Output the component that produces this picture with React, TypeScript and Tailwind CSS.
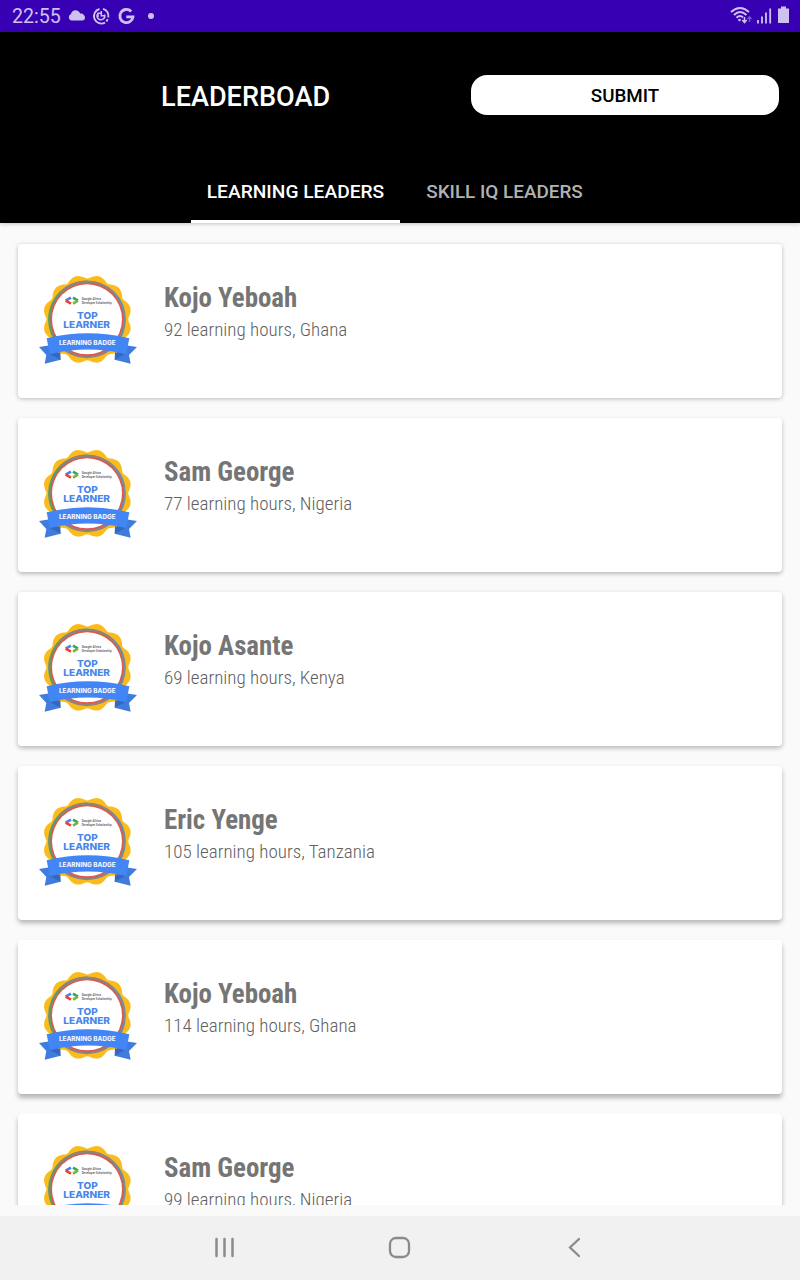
import React from "react";

const leaders = [
  { name: "Kojo Yeboah", detail: "92 learning hours, Ghana" },
  { name: "Sam George", detail: "77 learning hours, Nigeria" },
  { name: "Kojo Asante", detail: "69 learning hours, Kenya" },
  { name: "Eric Yenge", detail: "105 learning hours, Tanzania" },
  { name: "Kojo Yeboah", detail: "114 learning hours, Ghana" },
  { name: "Sam George", detail: "99 learning hours, Nigeria" },
];

// Elevation shadows deepen towards the bottom of the list.
const shadows = [
  "shadow-[0_1px_4px_rgba(0,0,0,0.26)]",
  "shadow-[0_2px_4px_rgba(0,0,0,0.26)]",
  "shadow-[0_2px_5px_rgba(0,0,0,0.28)]",
  "shadow-[0_3px_5px_rgba(0,0,0,0.28)]",
  "shadow-[0_4px_5px_rgba(0,0,0,0.28)]",
  "shadow-[0_4px_5px_rgba(0,0,0,0.28)]",
];

// Scalloped rosette outline: twelve lobes around the badge centre.
const rosette = (() => {
  const points: string[] = [];
  for (let i = 0; i < 360; i += 2) {
    const a = (i * Math.PI) / 180;
    const r = 119 + 14 * Math.sqrt(Math.sin(6 * a) ** 2 + 0.06);
    points.push(`${(172 + r * Math.sin(a)).toFixed(1)},${(163 - r * Math.cos(a)).toFixed(1)}`);
  }
  return points.join(" ");
})();

function Badge() {
  return (
    <svg viewBox="0 0 360 330" className="h-[110px] w-[120px] shrink-0">
      <polygon points={rosette} fill="#fbbc1b" />
      <circle cx="171" cy="163" r="112" fill="#e0574b" />
      <g fill="none" strokeWidth="7">
        <path d="M171 50A113 113 0 0 0 91 243" stroke="#5f9a70" />
        <path d="M91 83A113 113 0 0 1 251 83" stroke="#8c8480" />
        <path d="M251 83A113 113 0 0 1 251 243" stroke="#6f8fa0" />
        <path d="M91 243A113 113 0 0 0 251 243" stroke="#8c8480" />
      </g>
      <circle cx="171" cy="163" r="105" fill="#fff" />
      <path d="M123 98L107 107" fill="none" stroke="#4285f4" strokeWidth="8" />
      <path d="M107 107L123 116" fill="none" stroke="#ea4335" strokeWidth="8" />
      <path d="M129 98L144 107" fill="none" stroke="#34a853" strokeWidth="8" />
      <path d="M144 107L129 116" fill="none" stroke="#72b843" strokeWidth="8" />
      <g fontFamily="Roboto, sans-serif" fill="#555">
        <text x="155" y="106" fontSize="11" fontWeight="500" textLength="58" lengthAdjust="spacingAndGlyphs">Google Africa</text>
        <text x="155" y="116" fontSize="10" fontWeight="500" textLength="90" lengthAdjust="spacingAndGlyphs">Developer Scholarship</text>
      </g>
      <g fontFamily="Inter, sans-serif" fontWeight="800" fill="#4a86e8" textAnchor="middle">
        <text x="172" y="163" fontSize="28" textLength="62" lengthAdjust="spacingAndGlyphs">TOP</text>
        <text x="170" y="188" fontSize="28" textLength="140" lengthAdjust="spacingAndGlyphs">LEARNER</text>
      </g>
      <path d="M27 246L78 238L92 284L44 296L49 270Z" fill="#3f7cdd" />
      <path d="M321 246L268 238L254 284L302 296L297 270Z" fill="#3f7cdd" />
      <path d="M60 267L91 262L92 284Z" fill="#3467bd" />
      <path d="M286 267L255 262L254 284Z" fill="#3467bd" />
      <path d="M50 220Q173 190 298 220L289 267Q173 240 59 267Z" fill="#4285f4" />
      <text x="172" y="239" fontFamily="Inter, sans-serif" fontSize="18.5" fontWeight="800" fill="#eef4ff" textAnchor="middle" textLength="170" lengthAdjust="spacingAndGlyphs">LEARNING BADGE</text>
    </svg>
  );
}

function StatusBar() {
  return (
    <div className="flex h-8 shrink-0 items-center justify-between bg-[#3700b3] pl-3 text-[#cfc1ef]">
      <div className="flex items-center">
        <span className="w-[55px] pt-0.5 text-[19.600px] leading-8">22:55</span>
        <svg width="90" height="32" viewBox="0 0 90 32" fill="currentColor">
          <path d="M4 20.500A3.500 3.500 0 0 1 4 14C5 9.500 11 9 13.200 13.500C16.500 13 18 16 18 17.500C18 19.500 17 20.500 15 20.500Z" />
          <g fill="none" stroke="currentColor" strokeWidth="1.9">
            <path d="M32.500 9A7.400 7.400 0 1 0 38 22.600M36 8.800A7.400 7.400 0 0 1 41.300 17.500M40.800 19.300L39.300 21.600" />
            <path d="M31 13.500A3.800 3.800 0 1 0 37.500 14.500M31 17V13.300H34.500M34.300 11V15.800H37" strokeWidth="1.500" />
          </g>
          <path d="M64.200 11.500A6.600 6.600 0 1 0 66 16.800H59.300" fill="none" stroke="currentColor" strokeWidth="2.800" />
          <circle cx="84" cy="16" r="3" />
        </svg>
      </div>
      <svg width="90" height="32" viewBox="0 0 90 32" fill="none" stroke="currentColor">
        <path d="M21 12Q30 4 39 12M24 15Q30 9 36.500 15M26.500 17.800Q30 14.500 33 17.500" strokeWidth="1.900" />
        <circle cx="29.500" cy="20" r="1.300" fill="currentColor" stroke="none" />
        <path d="M34.500 17V22M32.300 20L34.500 22.500L36.700 20" strokeWidth="1.500" />
        <path d="M39.500 22V17M37.500 19L39.500 16.800L41.500 19" strokeWidth="1.300" opacity=".45" />
        <path d="M48 20V23.500M52 16.500V23.500M56 12.500V23.500M60.200 8.500V23.500" strokeWidth="1.800" />
        <path d="M68 8.500H71V6.500H76V8.500H79V23H68Z" fill="currentColor" stroke="none" />
      </svg>
    </div>
  );
}

export default function App() {
  return (
    <div className="flex h-[1280px] w-[800px] flex-col overflow-hidden bg-[#fafafa] font-['Roboto',sans-serif]">
      <StatusBar />
      <header className="z-10 flex h-[191px] shrink-0 flex-col bg-black text-white shadow-[0_1px_4px_rgba(0,0,0,0.22)]">
        <div className="flex h-32 items-center pr-[21px] pl-[161px]">
          <h1 className="w-[310px] pt-0.5 text-[27.100px] font-medium">LEADERBOAD</h1>
          <button className="mb-0.5 h-10 flex-1 rounded-[16px] bg-white pt-[3px] text-[18.800px] font-medium text-black">SUBMIT</button>
        </div>
        <nav className="flex h-[63px] justify-center text-[19.200px] font-medium">
          <div className="flex w-[209px] items-center justify-center border-b-[3px] border-white pt-[5px]">LEARNING LEADERS</div>
          <div className="flex w-[209px] items-center justify-center pt-0.5 text-[18.900px] text-[#b2b2b2]">SKILL IQ LEADERS</div>
        </nav>
      </header>
      <main className="flex h-[982px] shrink-0 flex-col gap-5 overflow-hidden px-[18px] pt-[21px]">
        {leaders.map((leader, i) => (
          <article key={i} className={`flex h-[154px] shrink-0 rounded-[4px] bg-white pt-[21px] pl-3 ${shadows[i]}`}>
            <Badge />
            <div className="pt-4 pl-[14px] text-[#757575] [font-family:'Roboto_Condensed',Roboto,sans-serif] [font-stretch:75%]">
              <h2 className="text-[26.900px] leading-[34px] font-bold whitespace-nowrap">{leader.name}</h2>
              <p className="text-[19px] leading-[30px] font-light whitespace-nowrap text-[#606060]">{leader.detail}</p>
            </div>
          </article>
        ))}
      </main>
      <footer className="mt-auto flex h-16 shrink-0 items-center justify-center bg-[#f1f1f1]">
        <svg width="400" height="64" viewBox="200 0 400 64" fill="none" stroke="#8b8b8b" strokeLinecap="round">
          <path d="M216.500 23V40M224.500 23V40M232.500 23V40" strokeWidth="2.500" />
          <rect x="390" y="22" width="19" height="19" rx="6" strokeWidth="2.300" />
          <path d="M579 23L570 31.500L579 40" strokeWidth="2.300" />
        </svg>
      </footer>
    </div>
  );
}
